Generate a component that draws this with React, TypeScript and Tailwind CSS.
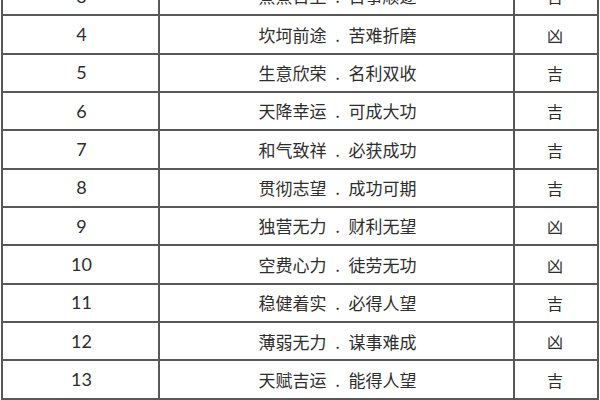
const rows: { n: number; text: string; luck: '吉' | '凶' }[] = [
  { n: 3, text: '蒸蒸日上．百事顺遂', luck: '吉' },
  { n: 4, text: '坎坷前途．苦难折磨', luck: '凶' },
  { n: 5, text: '生意欣荣．名利双收', luck: '吉' },
  { n: 6, text: '天降幸运．可成大功', luck: '吉' },
  { n: 7, text: '和气致祥．必获成功', luck: '吉' },
  { n: 8, text: '贯彻志望．成功可期', luck: '吉' },
  { n: 9, text: '独营无力．财利无望', luck: '凶' },
  { n: 10, text: '空费心力．徒劳无功', luck: '凶' },
  { n: 11, text: '稳健着实．必得人望', luck: '吉' },
  { n: 12, text: '薄弱无力．谋事难成', luck: '凶' },
  { n: 13, text: '天赋吉运．能得人望', luck: '吉' },
  { n: 14, text: '忍得若难．必有后福', luck: '凶' },
];

function Phrase({ text }: { text: string }) {
  const [a, b] = text.split('．');
  return (
    <span className="flex items-baseline">
      <span>{a}</span>
      <span className="w-[22px] text-center">.</span>
      <span>{b}</span>
    </span>
  );
}

export default function App() {
  return (
    <div className="h-[400px] w-[600px] overflow-hidden bg-white text-[#2e2e2e]">
      {/* table starts above the window: row 3 is cut off */}
      <div className="ml-[1px] mt-[-22px] w-[598px] border-l-2 border-[#585858]">
        {rows.map((r) => (
          <div key={r.n} className="flex h-[38.35px] border-b-2 border-[#585858]">
            <div className="flex w-[157px] items-center justify-center border-r-2 border-[#585858] pl-[2px] font-['Lato','Noto_Sans',sans-serif] text-[18px]">
              {r.n}
            </div>
            <div className="flex w-[355px] items-center justify-center border-r-2 border-[#585858] pl-[2px] font-['Noto_Sans_CJK_SC',sans-serif] text-[17px]">
              <Phrase text={r.text} />
            </div>
            <div className="flex w-[84px] items-center justify-center border-r-2 border-[#585858] pr-[2px] font-['Noto_Sans_CJK_SC',sans-serif] text-[16px]">
              {r.luck}
            </div>
          </div>
        ))}
      </div>
    </div>
  );
}
